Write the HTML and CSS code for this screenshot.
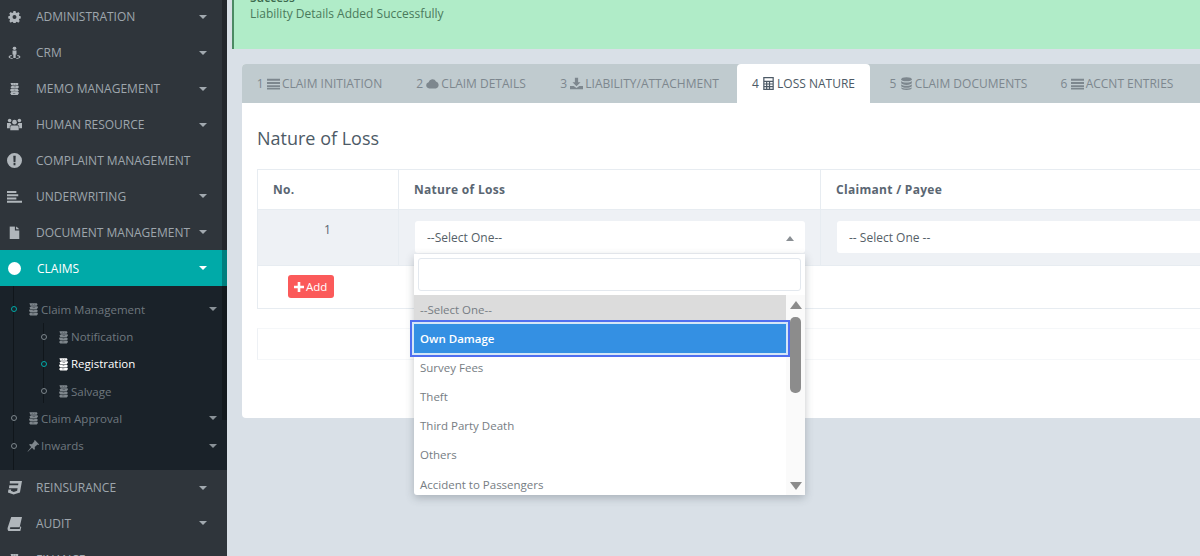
FILE: index.html
```html
<!DOCTYPE html>
<html lang="en">
<head>
    <meta charset="UTF-8">
    <title>Claim Registration</title>
    <link rel="stylesheet" href="styles.css">
</head>
<body>
    <svg class="sprite" xmlns="http://www.w3.org/2000/svg">
        <symbol id="i-gear" viewBox="0 0 16 16"><path fill-rule="evenodd" d="M6.7 1h2.6l.4 2 1.3.6 1.8-1.1 1.8 1.9-1.1 1.7.6 1.3 2 .4v2.600l-2 .4-.6 1.300 1.100 1.700-1.800 1.900-1.800-1.100-1.300.5-.4 2H6.700l-.4-2-1.300-.5-1.800 1.100-1.800-1.900 1.100-1.700-.6-1.300-2-.4V7.800l2-.4.6-1.300L1.400 4.400l1.800-1.900L5 3.600l1.300-.6zM8 6a2.500 2.500 0 1 0 0 5 2.500 2.500 0 0 0 0-5z"/></symbol>
        <symbol id="i-street" viewBox="0 0 16 16"><circle cx="8" cy="2.600" r="2.200"/><path d="M5.500 5.500h5v5H9.500V15h-3v-4.500h-1z"/><path d="M4.500 11.200v1.100C2.800 12.700 2 13.200 2 13.700c0 .8 2.500 1.300 3.800 1.400v.9C3.500 15.900 0.500 15.200 0.500 13.700c0-1.100 1.700-2 4-2.500zM11.500 11.200c2.300.5 4 1.400 4 2.500 0 1.500-3 2.200-5.300 2.300v-.9c1.300-.1 3.800-.6 3.800-1.400 0-.5-.8-1-2.500-1.400z"/></symbol>
        <symbol id="i-memo" viewBox="0 0 16 16"><path d="M3 1h9l1 1-1 2H4zM5 4.500h8l.5 2-1.500 1.500h-8L3 6zM3 8.500h9l1.500 2L12 12H4l-1.500-1.500zM4 12.500h9l.5 1.500-1.500 2H4l-1.500-2z"/><path fill="#2f353b" opacity=".55" d="M6 2h1v1H6zM9 2h1v1H9zM7 9.500h2v1H7zM6 13.500h3v1H6zM7 5.500h3v1H7z"/></symbol>
        <symbol id="i-users" viewBox="0 0 16 16"><circle cx="8" cy="5.500" r="2.500"/><circle cx="2.800" cy="3.700" r="1.900"/><circle cx="13.200" cy="3.700" r="1.900"/><path d="M4.500 9h7l1 1.500V14h-9v-3.500zM0 6.500h3.500L4.800 8 3 9.500V12H0zM12.500 6.500H16V12h-3V9.500L11.200 8z"/></symbol>
        <symbol id="i-alert" viewBox="0 0 16 16"><path fill-rule="evenodd" d="M8 0a8 8 0 1 1 0 16A8 8 0 0 1 8 0zM6.700 3l.3 6.500h2L9.300 3zM7 10.500V13h2v-2.500z"/></symbol>
        <symbol id="i-lines" viewBox="0 0 16 16"><path d="M0 2h10v2.200H0zM0 5.500h12v2.200H0zM0 9h10v2.200H0zM0 12.500h16v2.200H0z"/></symbol>
        <symbol id="i-file" viewBox="0 0 16 16"><path d="M2 0h6.500v5.500H14V16H2zM10 0l4 4h-4z"/></symbol>
        <symbol id="i-css3" viewBox="0 0 16 16"><path d="M3 1h13l-2.200 12.200L7 15.500 1 13.200l.5-3h3l-.3 1.300L7.200 12.700l3.600-1.200.5-2.800H2l.5-3h9.300l.4-2H3z"/></symbol>
        <symbol id="i-book" viewBox="0 0 16 16"><path d="M4.500 1H16l-2.500 11H4c-1.200 0-1.400 1.800 0 1.800h9.500l.7-3 1 .8-1.200 5.400H3C.8 16 .3 14.300.7 12.500z"/></symbol>
        <symbol id="i-pin" viewBox="0 0 16 16"><path d="M10 1l5 5-1 .8-1-.5-3.500 3 .2 2.500-1 1-2.500-2.600L1 15l-.3-.3 4.400-5.600-2.500-2.500 1-1 2.500.2 3-3.500-.5-1z"/></symbol>
        <symbol id="i-bars" viewBox="0 0 16 16"><path d="M0 2h16v2.500H0zM0 6h16v2.500H0zM0 10h16v2.500H0zM0 13.500h16V15.500H0z"/></symbol>
        <symbol id="i-cloud" viewBox="0 0 16 16"><path d="M4 14a3.800 3.800 0 0 1-.8-7.500A4.800 4.800 0 0 1 12.300 5.600 4.300 4.300 0 0 1 12 14z"/></symbol>
        <symbol id="i-download" viewBox="0 0 16 16"><path d="M6 1h4v5.500h3L8 11.500 3 6.500h3zM0 11h4.500L8 13.500 11.500 11H16v4H0z"/></symbol>
        <symbol id="i-calc" viewBox="0 0 16 16"><path fill-rule="evenodd" d="M1.500 0h13v16h-13zM3 1.500v3h10v-3zM3 6v2h2V6zm3.500 0v2h2V6zM10 6v2h3V6zM3 9.200v2h2v-2zm3.500 0v2h2v-2zm3.500 0v2h3v-2zM3 12.500v2h2v-2zm3.500 0v2h2v-2zm3.500 0v2h3v-2z"/></symbol>
        <symbol id="i-db" viewBox="0 0 16 16"><ellipse cx="8" cy="2.800" rx="6.500" ry="2.500"/><path d="M1.500 5c1 1.200 3.500 1.900 6.500 1.900s5.500-.7 6.500-1.900v2.500C14.500 8.900 11.500 9.800 8 9.800s-6.500-.9-6.500-2.300zM1.500 9c1 1.200 3.500 1.900 6.500 1.900s5.500-.7 6.500-1.900v2c0 1.400-3 2.300-6.500 2.300S1.500 12.400 1.500 11zM1.500 12.500c1 1.200 3.500 1.700 6.500 1.700s5.500-.5 6.500-1.700v1c0 1.400-3 2.500-6.500 2.500s-6.500-1.100-6.500-2.500z"/></symbol>
        <symbol id="i-plus" viewBox="0 0 10 10"><path d="M3.700 0h2.600v3.700H10v2.600H6.300V10H3.700V6.300H0V3.700h3.700z"/></symbol>
    </svg>

    <aside class="sidebar">
        <div class="sidebar-thumb"></div>
        <ul class="nav nav-top">
            <li class="nav-item"><svg class="nav-icon small"><use href="#i-gear"/></svg><span class="nav-label">ADMINISTRATION</span><i class="caret"></i></li>
            <li class="nav-item"><svg class="nav-icon small"><use href="#i-street"/></svg><span class="nav-label">CRM</span><i class="caret"></i></li>
            <li class="nav-item"><svg class="nav-icon small"><use href="#i-memo"/></svg><span class="nav-label">MEMO MANAGEMENT</span><i class="caret"></i></li>
            <li class="nav-item"><svg class="nav-icon"><use href="#i-users"/></svg><span class="nav-label">HUMAN RESOURCE</span><i class="caret"></i></li>
            <li class="nav-item"><svg class="nav-icon"><use href="#i-alert"/></svg><span class="nav-label">COMPLAINT MANAGEMENT</span></li>
            <li class="nav-item"><svg class="nav-icon"><use href="#i-lines"/></svg><span class="nav-label">UNDERWRITING</span><i class="caret"></i></li>
            <li class="nav-item"><svg class="nav-icon small"><use href="#i-file"/></svg><span class="nav-label">DOCUMENT MANAGEMENT</span><i class="caret"></i></li>
            <li class="nav-item active"><span class="nav-dot"></span><span class="nav-label">CLAIMS</span><i class="caret"></i></li>
        </ul>
        <ul class="subnav">
            <li class="sub-item current"><span class="ring"></span><svg class="sub-icon"><use href="#i-memo"/></svg><span class="sub-label">Claim Management</span><i class="caret"></i></li>
            <li>
                <ul class="subnav-inner">
                    <li class="sub-item"><span class="ring"></span><svg class="sub-icon"><use href="#i-memo"/></svg><span class="sub-label">Notification</span><i class="caret"></i></li>
                    <li class="sub-item current selected"><span class="ring"></span><svg class="sub-icon"><use href="#i-memo"/></svg><span class="sub-label">Registration</span></li>
                    <li class="sub-item"><span class="ring"></span><svg class="sub-icon"><use href="#i-memo"/></svg><span class="sub-label">Salvage</span></li>
                </ul>
            </li>
            <li class="sub-item"><span class="ring"></span><svg class="sub-icon"><use href="#i-memo"/></svg><span class="sub-label">Claim Approval</span><i class="caret"></i></li>
            <li class="sub-item"><span class="ring"></span><svg class="sub-icon"><use href="#i-pin"/></svg><span class="sub-label">Inwards</span><i class="caret"></i></li>
        </ul>
        <ul class="nav">
            <li class="nav-item"><svg class="nav-icon"><use href="#i-css3"/></svg><span class="nav-label">REINSURANCE</span><i class="caret"></i></li>
            <li class="nav-item"><svg class="nav-icon"><use href="#i-book"/></svg><span class="nav-label">AUDIT</span><i class="caret"></i></li>
            <li class="nav-item"><svg class="nav-icon small"><use href="#i-memo"/></svg><span class="nav-label">FINANCE</span><i class="caret"></i></li>
        </ul>
    </aside>

    <main class="content">
        <div class="alert">
            <strong class="alert-title">Success</strong>
            <span>Liability Details Added Successfully</span>
        </div>

        <section class="panel">
            <ul class="tabs">
                <li class="tab">1 <svg class="tab-icon"><use href="#i-bars"/></svg> CLAIM INITIATION</li>
                <li class="tab">2 <svg class="tab-icon"><use href="#i-cloud"/></svg> CLAIM DETAILS</li>
                <li class="tab">3 <svg class="tab-icon"><use href="#i-download"/></svg> LIABILITY/ATTACHMENT</li>
                <li class="tab active">4 <svg class="tab-icon"><use href="#i-calc"/></svg> LOSS NATURE</li>
                <li class="tab">5 <svg class="tab-icon"><use href="#i-db"/></svg> CLAIM DOCUMENTS</li>
                <li class="tab">6 <svg class="tab-icon"><use href="#i-bars"/></svg> ACCNT ENTRIES</li>
            </ul>

            <div class="panel-body">
                <h2 class="panel-title">Nature of Loss</h2>

                <div class="loss-table">
                    <div class="cell head col-no">No.</div>
                    <div class="cell head col-nature">Nature of Loss</div>
                    <div class="cell head col-payee">Claimant / Payee</div>

                    <div class="cell row col-no num">1</div>
                    <div class="cell row col-nature">
                        <div class="select-box open">--Select One--<i class="select-arrow"></i></div>
                    </div>
                    <div class="cell row col-payee">
                        <div class="select-box">-- Select One --</div>
                    </div>

                    <div class="cell foot">
                        <button class="btn-add" type="button"><svg class="plus"><use href="#i-plus"/></svg>Add</button>
                    </div>

                    <div class="dropdown">
                        <div class="dropdown-search"></div>
                        <div class="dropdown-list">
                            <ul class="options">
                                <li class="option picked">--Select One--</li>
                                <li class="option focused">Own Damage</li>
                                <li class="option">Survey Fees</li>
                                <li class="option">Theft</li>
                                <li class="option">Third Party Death</li>
                                <li class="option">Others</li>
                                <li class="option">Accident to Passengers</li>
                            </ul>
                            <div class="scrollbar">
                                <i class="scroll-up"></i>
                                <div class="scroll-thumb"></div>
                                <i class="scroll-down"></i>
                            </div>
                        </div>
                    </div>
                </div>

                <div class="empty-box"></div>
            </div>
        </section>
    </main>
</body>
</html>
```

FILE: styles.css
```css
* {
    box-sizing: border-box;
}

body {
    font-family: "Open Sans", Arial, sans-serif;
    font-size: 12px;
    background-color: #d9e0e7;
    color: #5b6670;
    margin: 0;
    height: 556px;
    overflow: hidden;
    display: flex;
}

ul {
    list-style: none;
    margin: 0;
    padding: 0;
}

.sprite {
    display: none;
}

/* sidebar */
.sidebar {
    position: relative;
    width: 227px;
    height: 556px;
    flex: none;
    overflow: hidden;
    background-color: #2f353b;
}

.sidebar-thumb {
    position: absolute;
    top: 0;
    right: 0;
    width: 5px;
    height: 420px;
    background-color: rgba(0, 0, 0, 0.25);
    z-index: 2;
}

.nav-top {
    margin-top: -1px;
}

.nav-item {
    display: flex;
    align-items: center;
    height: 35.9px;
    padding-left: 7px;
    color: #9ea6ad;
    font-size: 12px;
}

.nav-icon {
    width: 15px;
    height: 15px;
    flex: none;
    fill: #b0b6bb;
    margin-right: 14px;
}

.nav-icon.small {
    transform: scale(0.85);
}

.nav-label {
    white-space: nowrap;
}

.nav-item .caret {
    position: absolute;
    left: 199px;
}

.caret {
    width: 0;
    height: 0;
    border-left: 4px solid transparent;
    border-right: 4px solid transparent;
    border-top: 4px solid #a2a9af;
}

.nav-item.active {
    background-color: #00aaa8;
    color: #fff;
}

.nav-item.active .caret {
    border-top-color: #fff;
}

.nav-dot {
    width: 13px;
    height: 13px;
    margin: 0 16px 0 1px;
    border-radius: 50%;
    background-color: #fff;
}

.subnav {
    position: relative;
    height: 183.500px;
    padding-top: 9.500px;
    background-color: #1a2229;
}

.subnav::before {
    content: "";
    position: absolute;
    left: 13px;
    top: 0;
    bottom: 0;
    width: 1px;
    background-color: #10161b;
}

.subnav-inner {
    position: relative;
    padding-left: 30px;
}

.subnav-inner::before {
    content: "";
    position: absolute;
    left: 43px;
    top: 0;
    bottom: 2px;
    width: 1px;
    background-color: #10161b;
}

.sub-item {
    position: relative;
    display: flex;
    align-items: center;
    height: 27.300px;
    padding-left: 11px;
    color: #6f787f;
    font-size: 11.500px;
}

.sub-item .caret {
    position: absolute;
    left: 209px;
    border-top-color: #8a9298;
}

.ring {
    position: relative;
    z-index: 1;
    width: 6px;
    height: 6px;
    margin-right: 10px;
    border: 1.500px solid #7d868c;
    border-radius: 50%;
    background-color: #1a2229;
}

.sub-icon {
    width: 13px;
    height: 14px;
    flex: none;
    fill: #7f878d;
    margin-right: 1px;
}

.current .ring {
    border-color: #00aaa8;
}

.selected {
    color: #fff;
}

.selected .sub-icon {
    fill: #fff;
}

/* main column */
.content {
    flex: 1;
    min-width: 0;
    height: 556px;
}

.alert {
    display: flex;
    flex-direction: column;
    justify-content: flex-end;
    height: 49px;
    margin-left: 5px;
    padding: 0 16px 27px;
    overflow: hidden;
    line-height: 16px;
    background-color: #b0ecc8;
    border-left: 2px solid #4b8a63;
    color: #4a7a5c;
    font-size: 12px;
}

.alert-title {
    font-size: 12px;
    font-weight: 600;
    color: #3c6a4e;
}

.panel {
    height: 354px;
    margin: 15px 0 0 15px;
    background-color: #fff;
    border-radius: 4px 0 0 4px;
}

/* tabs */
.tabs {
    display: flex;
    height: 39px;
    background-color: #c0cbcf;
    border-radius: 4px 0 0 0;
}

.tab {
    display: flex;
    align-items: center;
    justify-content: center;
    height: 39px;
    padding-bottom: 1px;
    white-space: pre;
    color: #7d878e;
    font-size: 12px;
}

.tab:nth-child(1) { width: 155px; }
.tab:nth-child(2) { width: 148px; }
.tab:nth-child(3) { width: 192px; padding-right: 3px; }
.tab:nth-child(4) { width: 133px; }
.tab:nth-child(5) { width: 172px; padding-left: 5px; }
.tab:nth-child(6) { width: 150px; }

.tab-icon {
    width: 13px;
    height: 13px;
    fill: currentColor;
    margin: 0 -1px 0 0;
}

.tab.active {
    background-color: #fff;
    color: #4d5a66;
    border-radius: 4px 4px 0 0;
}

.panel-body {
    padding-left: 15px;
}

.panel-title {
    margin: 0;
    height: 66px;
    padding-top: 23px;
    font-size: 18px;
    font-weight: 400;
    line-height: 25px;
    color: #4d5a66;
}

/* table */
.loss-table {
    position: relative;
    display: grid;
    grid-template-columns: 141px 422px 1fr;
    grid-template-rows: 40px 56px 42px;
    border-top: 1px solid #e7ecf1;
    border-left: 1px solid #e7ecf1;
    border-bottom: 1px solid #e7ecf1;
}

.cell {
    padding: 0 15px;
    border-right: 1px solid #e7ecf1;
    border-bottom: 1px solid #e7ecf1;
}

.cell.col-payee {
    border-right: 0;
}

.cell.head {
    display: flex;
    align-items: center;
    font-weight: 700;
    font-size: 12px;
    letter-spacing: 0.3px;
    color: #5a6672;
}

.cell.row {
    padding-top: 11px;
    padding-left: 16px;
    background-color: #eef1f5;
}

.cell.num {
    text-align: center;
    padding-top: 12px;
    padding-left: 0;
    padding-right: 1px;
    line-height: 16px;
}

.cell.foot {
    grid-column: 1 / 4;
    padding: 9px 0 0 30px;
    border-right: 0;
    border-bottom: 0;
}

.select-box {
    position: relative;
    display: flex;
    align-items: center;
    height: 32px;
    padding: 1px 12px 0;
    background-color: #fff;
    border-radius: 3px;
    font-size: 12px;
    color: #555f68;
}

.cell.col-payee .select-box {
    margin-right: -60px;
}

.select-arrow {
    position: absolute;
    right: 11px;
    top: 15px;
    width: 0;
    height: 0;
    border-left: 4px solid transparent;
    border-right: 4px solid transparent;
    border-bottom: 5px solid #8a8f94;
}

.btn-add {
    display: flex;
    align-items: center;
    height: 23px;
    width: 46px;
    padding: 0 0 0 6px;
    border: 0;
    border-radius: 3px;
    background-color: #fb5a5a;
    color: #fff;
    font-family: inherit;
    font-size: 11.500px;
}

.plus {
    width: 10px;
    height: 10px;
    fill: #fff;
    margin-right: 2px;
}

/* open select dropdown */
.dropdown {
    position: absolute;
    left: 156px;
    top: 84px;
    width: 391px;
    height: 241px;
    padding-top: 4px;
    background-color: #fff;
    border-radius: 0 0 3px 3px;
    box-shadow: 0 3px 8px rgba(60, 70, 80, 0.3);
    z-index: 5;
}

.dropdown-search {
    height: 33px;
    margin: 0 4px;
    border: 1px solid #e3e8ee;
    border-radius: 3px;
}

.dropdown-list {
    display: flex;
    height: 200px;
    margin-top: 4px;
}

.options {
    width: 372px;
    flex: none;
}

.option {
    display: flex;
    align-items: center;
    height: 29.100px;
    padding-left: 6px;
    font-size: 11.500px;
    color: #767d83;
}

.option.picked {
    background-color: #dcdcdc;
    height: 29px;
    padding-bottom: 1px;
}

.option.focused {
    position: relative;
    background-color: #3490e3;
    color: #fff;
    font-weight: 600;
    box-shadow: 0 0 0 2px #d5e6f7;
    outline: 2px solid #4f6ff0;
    outline-offset: 2px;
    z-index: 1;
}

.scrollbar {
    position: relative;
    flex: 1;
    background-color: #fafafa;
}

.scroll-up,
.scroll-down {
    position: absolute;
    left: 4px;
    width: 0;
    height: 0;
    border-left: 6px solid transparent;
    border-right: 6px solid transparent;
}

.scroll-up {
    top: 6px;
    border-bottom: 8px solid #8c8c8c;
}

.scroll-down {
    bottom: 5px;
    border-top: 8px solid #8c8c8c;
}

.scroll-thumb {
    position: absolute;
    top: 22px;
    left: 4px;
    width: 11px;
    height: 76px;
    border-radius: 5px;
    background-color: #8c8c8c;
}

.empty-box {
    height: 32px;
    margin-top: 19px;
    border: 1px solid #f5f7f9;
    border-left-color: #eef1f5;
    border-right: 0;
}
```
